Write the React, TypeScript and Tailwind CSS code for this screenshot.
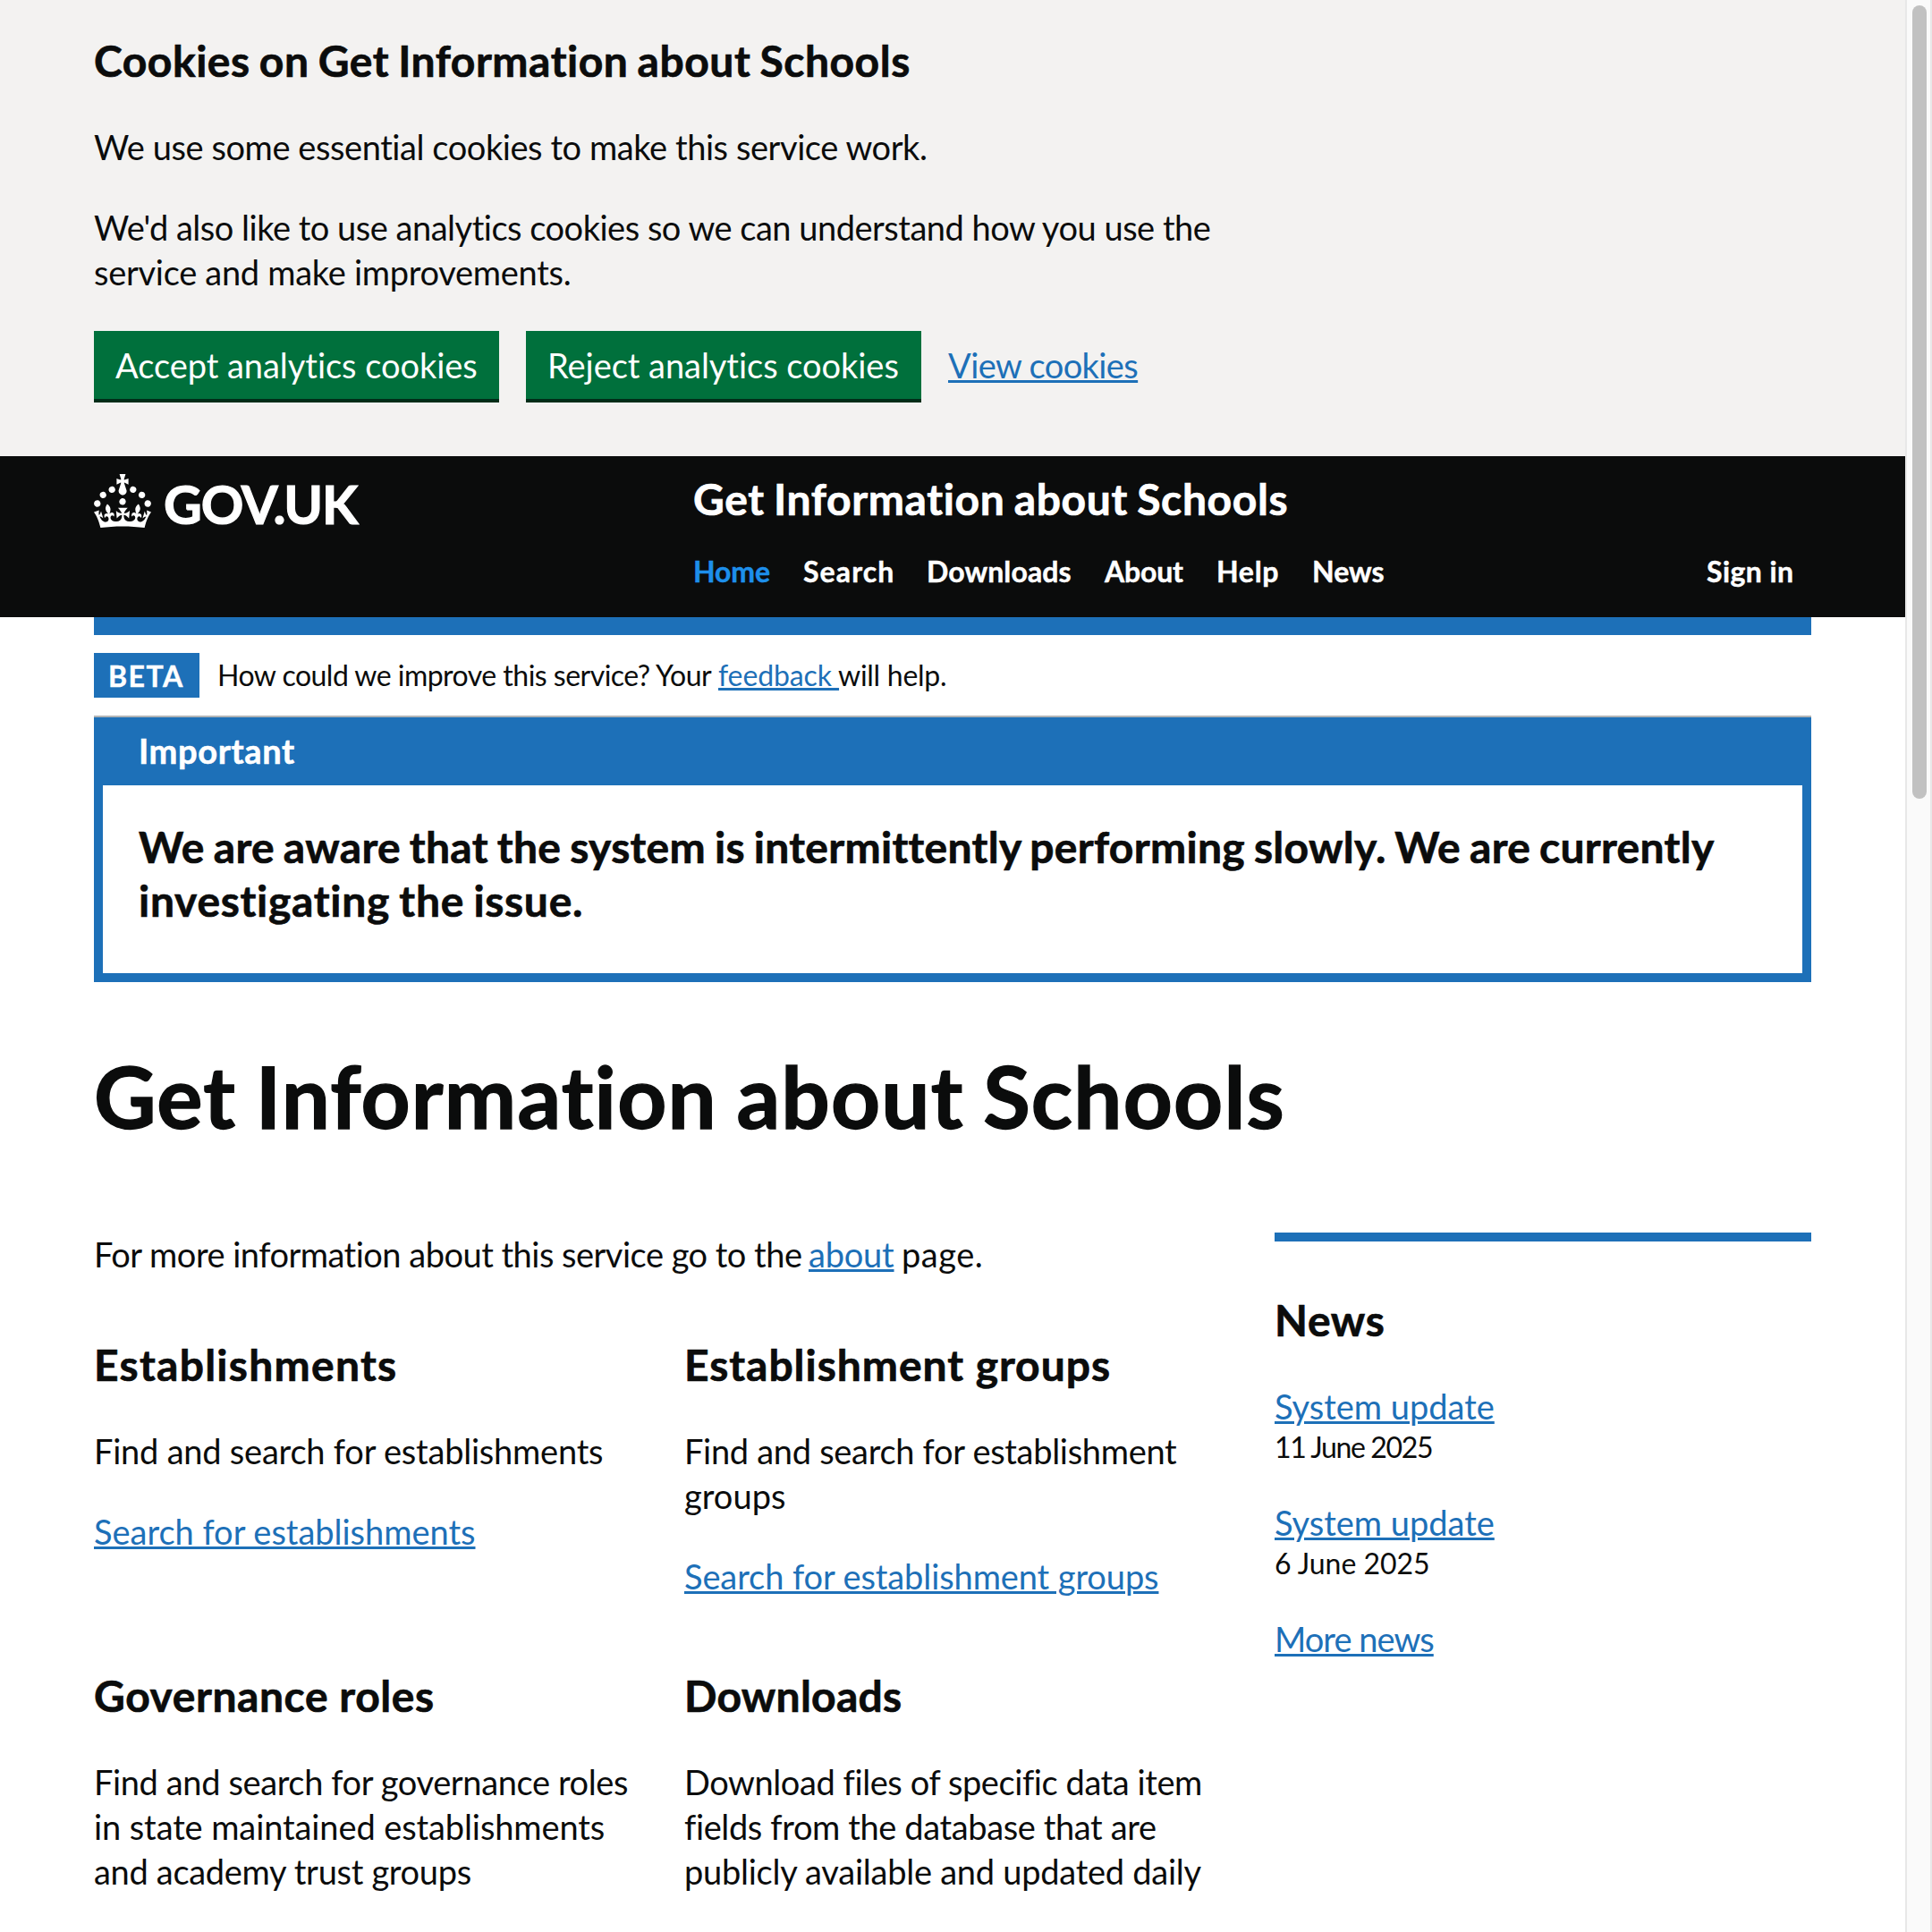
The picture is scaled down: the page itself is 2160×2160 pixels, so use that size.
const bold = 'font-bold [-webkit-text-stroke:0.014em]';
const link = 'text-[#1d70b8] underline decoration-[3px] underline-offset-[2px]';
const h2 = 'text-[48px] leading-[60px] ' + bold;

/** One unbroken run of text; `c` carries its letter spacing. */
function T({ t, c }: { t: string; c: string }) {
  return <span className={'whitespace-pre [font-variant-ligatures:none] ' + c}>{t}</span>;
}

function Crown() {
  return (
    <svg viewBox="0 0 32 30" className="h-[60px] w-16" fill="currentColor" aria-hidden="true">
      <path d="M22.6 10.4c-1 .4-2-.1-2.4-1-.4-.9.1-2 1-2.4.9-.4 2 .1 2.4 1s-.1 2-1 2.4m-5.9 6.7c-.9.4-2-.1-2.4-1-.4-.9.1-2 1-2.4.9-.4 2 .1 2.4 1s-.1 2-1 2.4m10.8-3.7c-1 .4-2-.1-2.4-1-.4-.9.1-2 1-2.4.9-.4 2 .1 2.4 1s0 2-1 2.4m3.3 4.8c-1 .4-2-.1-2.4-1-.4-.9.1-2 1-2.4.9-.4 2 .1 2.4 1s-.1 2-1 2.4M17 4.7l2.3 1.2V2.5l-2.3.7-.2-.2.9-3h-3.4l.9 3-.2.2c-.1.1-2.3-.7-2.3-.7v3.4L15 4.7c.1.1.1.2.2.2l-1.3 4c-.1.2-.1.4-.1.6 0 1.1.8 2 1.9 2.2h.7c1-.2 1.9-1.1 1.9-2.1 0-.2 0-.4-.1-.6l-1.3-4c-.1-.2 0-.2.1-.3m-7.6 5.7c.9.4 2-.1 2.4-1 .4-.9-.1-2-1-2.4-.9-.4-2 .1-2.4 1s0 2 1 2.4m-5 3c.9.4 2-.1 2.4-1 .4-.9-.1-2-1-2.4-.9-.4-2 .1-2.4 1s.1 2 1 2.4m-3.2 4.8c.9.4 2-.1 2.4-1 .4-.9-.1-2-1-2.4-.9-.4-2 .1-2.4 1s0 2 1 2.4m14.8 11c4.4 0 8.6.3 12.3.8 1.1-4.5 2.4-7 3.7-8.8l-2.5-.9c.2 1.3.3 1.9 0 2.7-.4-.4-.8-1.1-1.1-2.3l-1.2 4c.7-.5 1.3-.8 2-.9-1.1 2.5-2.6 3.1-3.5 3-1.1-.2-1.7-1.2-1.5-2.1.3-1.2 1.5-1.5 2.1-.1 1.1-2.3-.8-3-2-2.3 1.9-1.9 2.1-3.5.6-5.6-2.1 1.6-2.1 3.2-1.2 5.5-1.2-1.4-3.2-.6-2.5 1.6.9-1.4 2.1-.5 1.9.8-.2 1.1-1.7 2.1-3.5 1.9-2.7-.2-2.9-2.1-2.9-3.6.7-.1 1.9.5 2.9 1.9l.4-4.3c-1.1 1.1-2.1 1.4-3.2 1.4.4-1.2 2.1-3 2.1-3h-5.4s1.7 1.9 2.1 3c-1.1 0-2.1-.2-3.2-1.4l.4 4.3c1-1.4 2.2-2 2.9-1.9-.1 1.5-.2 3.4-2.9 3.6-1.9.2-3.4-.8-3.5-1.9-.2-1.3 1-2.2 1.9-.8.7-2.3-1.2-3-2.5-1.6.9-2.2.9-3.9-1.2-5.5-1.5 2-1.3 3.7.6 5.6-1.2-.7-3.1 0-2 2.3.6-1.4 1.8-1.1 2.1.1.2.9-.3 1.9-1.5 2.1-.9.2-2.4-.5-3.5-3 .6 0 1.2.3 2 .9l-1.2-4c-.3 1.1-.7 1.9-1.1 2.3-.3-.8-.2-1.4 0-2.7l-2.9.9C1.3 23 2.6 25.5 3.7 30c3.7-.5 7.9-.8 12.3-.8" />
    </svg>
  );
}

const nav: [string, string, string][] = [
  ['Home', 'w-[87px] text-[#1d8feb]', 'tracking-[-0.12px]'],
  ['Search', 'w-[102px]', 'tracking-[1.1px]'],
  ['Downloads', 'w-[163px]', 'tracking-[0.1px]'],
  ['About', 'w-[89px]', 'tracking-[-0.2px]'],
  ['Help', 'w-[71px]', 'tracking-[0.7px]'],
  ['News', '', 'tracking-[0px]'],
];

type Run = [string, string];

function Card({ h, p, l }: { h: Run; p: Run[]; l?: Run }) {
  return (
    <section>
      <h2 className={h2}><T t={h[0]} c={h[1]} /></h2>
      <p className="mt-[41px]">
        {p.map(([t, c]) => <span key={t} className="block"><T t={t} c={c} /></span>)}
      </p>
      {l && <a className={'mt-10 block ' + link}><T t={l[0]} c={l[1]} /></a>}
    </section>
  );
}

function NewsItem({ date, c }: { date: string; c: string }) {
  return (
    <div className="mb-10">
      <a className={link}><T t="System update" c="tracking-[-0.01px]" /></a>
      <p className="pt-px text-[32px] leading-[39px]"><T t={date} c={c} /></p>
    </div>
  );
}

export default function App() {
  return (
    <div className="flex h-[2160px] w-[2160px] overflow-hidden bg-white text-[38px] leading-[50px] text-[#0b0c0c] [font-family:Lato,'Noto_Sans',sans-serif]">
      <div className="w-[2130px] shrink-0">
        <div className="h-[510px] bg-[#f3f2f1] px-[105px] pt-[38px]">
          <h2 className={h2}><T t="Cookies on Get Information about Schools" c="tracking-[0.52px] [word-spacing:-2px]" /></h2>
          <p className="mt-[41px]"><T t="We use some essential cookies to make this service work." c="tracking-[-0.43px]" /></p>
          <p className="mt-10">
            <T t="We'd also like to use analytics cookies so we can understand how you use the" c="tracking-[-0.49px]" />
            <br />
            <T t="service and make improvements." c="tracking-[-0.29px]" />
          </p>
          <div className="mt-[41px] flex h-20 gap-[30px] text-white">
            <button className="h-[76px] w-[453px] bg-[#00703c] pl-6 text-left shadow-[0_4px_0_#002d18]"><T t="Accept analytics cookies" c="tracking-[-0.04px]" /></button>
            <button className="h-[76px] w-[442px] bg-[#00703c] pl-6 text-left shadow-[0_4px_0_#002d18]"><T t="Reject analytics cookies" c="tracking-[-0.04px]" /></button>
            <a className={'mt-[13px] ' + link}><T t="View cookies" c="tracking-[-0.6px]" /></a>
          </div>
        </div>

        <header className="flex h-[180px] bg-[#0b0c0c] px-[105px] text-white">
          <div className="flex w-[670px] pt-5">
            <Crown />
            <span className="ml-[14px] mt-1 text-[59px] font-bold leading-[60px] [-webkit-text-stroke:0.02em]"><T t="GOV.UK" c="tracking-[-1.15px]" /></span>
          </div>
          <div className="flex-1 pt-[18px]">
            <div className={h2}><T t="Get Information about Schools" c="tracking-[0.63px] [word-spacing:-2px]" /></div>
            <nav className={'mt-[31px] flex gap-9 text-[32px] leading-10 ' + bold}>
              {nav.map(([t, c, s]) => <a key={t} className={c}><T t={t} c={s} /></a>)}
              <a className="ml-auto w-[117px]"><T t="Sign in" c="tracking-[0.42px]" /></a>
            </nav>
          </div>
        </header>

        <main className="px-[105px]">
          <div className="h-5 bg-[#1d70b8]" />
          <div className="flex h-[92px] gap-5 border-b-2 border-[#b1b4b6] pt-5 text-[32px] leading-10">
            <strong className={'h-[50px] w-[118px] bg-[#1d70b8] pl-4 pt-[6px] text-white ' + bold}><T t="BETA" c="tracking-[1.53px]" /></strong>
            <p className="flex pt-[5px]">
              <span className="w-[560px]"><T t="How could we improve this service? Your" c="tracking-[-0.52px]" /></span>
              <a className={'w-[134px] ' + link}><T t="feedback " c="tracking-[-0.1px]" /></a>
              <T t="will help." c="tracking-[-0.26px]" />
            </p>
          </div>

          <section className="h-[296px] border-[10px] border-t-0 border-[#1d70b8]">
            <div className={'h-[76px] bg-[#1d70b8] pl-10 pt-3 text-white ' + bold}><T t="Important" c="tracking-[0.63px]" /></div>
            <p className={'pl-10 pt-[39px] ' + h2}>
              <T t="We are aware that the system is intermittently performing slowly. We are currently" c="tracking-[0.3px] [word-spacing:-2px]" />
              <br />
              <T t="investigating the issue." c="tracking-[0.7px] [word-spacing:-2px]" />
            </p>
          </section>

          <h1 className={'mt-[77px] text-[96px] leading-[100px] ' + bold}><T t="Get Information about Schools" c="tracking-[1.2px] [word-spacing:-3px]" /></h1>

          <div className="mt-[101px] flex gap-[60px]">
            <div className="w-[1260px] pt-px">
              <p className="flex">
                <span className="w-[799px]"><T t="For more information about this service go to the" c="tracking-[-0.51px]" /></span>
                <a className={'w-[104px] ' + link}><T t="about" c="tracking-[-0.2px]" /></a>
                <T t="page." c="tracking-[0.5px]" />
              </p>
              <div className="mt-[69px] grid grid-cols-[600px_600px] gap-x-[60px]">
                <div className="h-[370px]">
                  <Card
                    h={['Establishments', 'tracking-[1.27px]']}
                    p={[['Find and search for establishments', 'tracking-[-0.22px]']]}
                    l={['Search for establishments', 'tracking-[-0.02px]']}
                  />
                </div>
                <Card
                  h={['Establishment groups', 'tracking-[0.96px]']}
                  p={[['Find and search for establishment', 'tracking-[-0.3px]'], ['groups', 'tracking-[0.03px]']]}
                  l={['Search for establishment groups', 'tracking-[-0.1px]']}
                />
                <Card
                  h={['Governance roles', 'tracking-[0.58px]']}
                  p={[
                    ['Find and search for governance roles', 'tracking-[-0.38px]'],
                    ['in state maintained establishments', 'tracking-[-0.1px]'],
                    ['and academy trust groups', 'tracking-[-0.31px]'],
                  ]}
                />
                <Card
                  h={['Downloads', 'tracking-[0.24px]']}
                  p={[
                    ['Download files of specific data item', 'tracking-[-0.42px]'],
                    ['fields from the database that are', 'tracking-[-0.38px]'],
                    ['publicly available and updated daily', 'tracking-[-0.25px]'],
                  ]}
                />
              </div>
            </div>

            <aside className="w-[600px] pt-0.5">
              <div className="h-[10px] bg-[#1d70b8]" />
              <h2 className={'mb-[41px] mt-[58px] ' + h2}><T t="News" c="tracking-[0.64px]" /></h2>
              <NewsItem date="11 June 2025" c="tracking-[-1.36px]" />
              <NewsItem date="6 June 2025" c="tracking-[-0.04px]" />
              <a className={link}><T t="More news" c="tracking-[-0.95px]" /></a>
            </aside>
          </div>
        </main>
      </div>

      <div className="w-[30px] shrink-0 border-x-2 border-[#e8e8e8] bg-[#fafafa] pl-1.5 pt-1.5">
        <div className="h-[887px] w-4 rounded-full bg-[#c1c1c1]" />
      </div>
    </div>
  );
}
